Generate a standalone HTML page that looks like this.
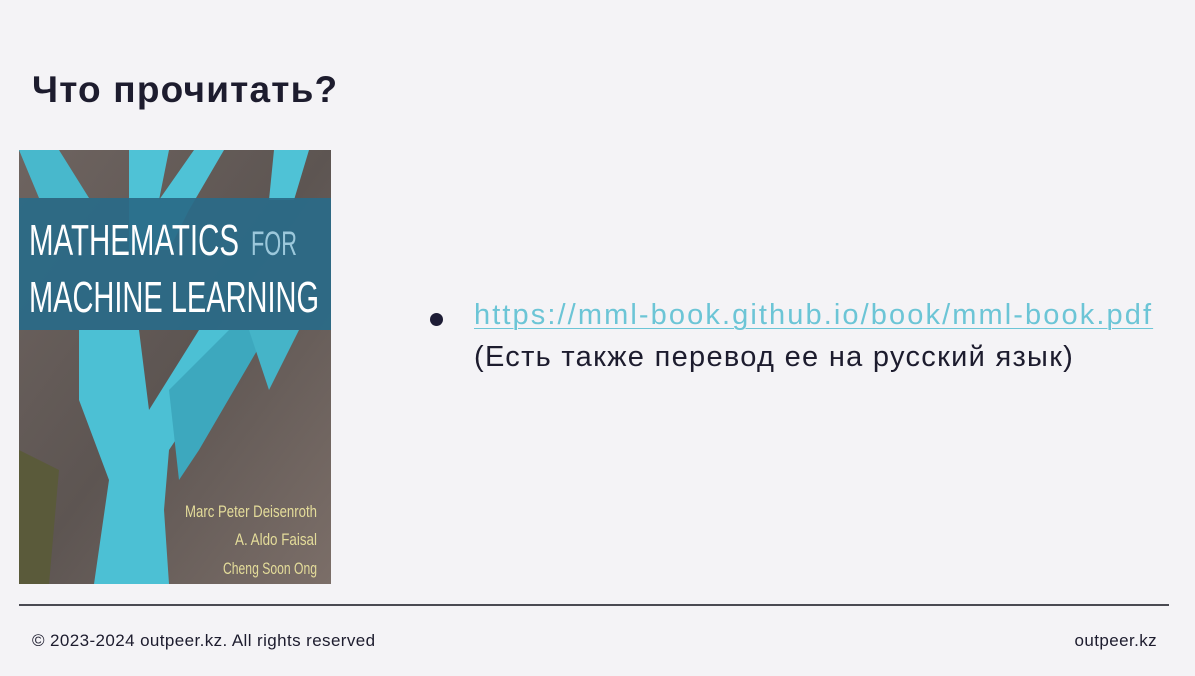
<!DOCTYPE html>
<html><head><meta charset="utf-8"><style>
html,body{margin:0;padding:0;}
body{width:1195px;height:676px;background:#f4f3f6;position:relative;overflow:hidden;font-family:"Liberation Sans",sans-serif;color:#1d1c2e;}
h1{position:absolute;left:32px;top:69px;margin:0;font-size:37px;font-weight:bold;letter-spacing:1.2px;}
.cover{position:absolute;left:19px;top:150px;width:312px;height:434px;}
.dot{position:absolute;left:430px;top:313px;width:13px;height:13px;border-radius:50%;background:#1d1c35;}
.link{position:absolute;left:474px;top:299px;font-size:29px;color:#6cc5d6;text-decoration:underline;text-decoration-thickness:1px;text-underline-offset:4px;white-space:nowrap;letter-spacing:2.1px;}
.ru{position:absolute;left:474px;top:341px;font-size:29px;white-space:nowrap;letter-spacing:1.3px;}
.line{position:absolute;left:19px;top:604px;width:1150px;height:2px;background:#4a4a52;}
.f1{position:absolute;left:32px;top:631px;font-size:17px;letter-spacing:0.4px;}
.f2{position:absolute;right:38px;top:631px;font-size:17px;letter-spacing:0.4px;}
</style></head><body>
<h1>Что прочитать?</h1>
<svg class="cover" viewBox="0 0 312 434" xmlns="http://www.w3.org/2000/svg">
<defs><linearGradient id="g" x1="0" y1="0" x2="1" y2="1"><stop offset="0" stop-color="#6e6460"/><stop offset="0.5" stop-color="#5d5552"/><stop offset="1" stop-color="#7b6e68"/></linearGradient></defs>
<rect width="312" height="434" fill="url(#g)"/>
<path d="M0 300 L40 320 L30 434 L0 434Z" fill="#5a5a3a"/>
<path d="M110 0 L150 0 L140 50 L175 0 L205 0 L170 60 L150 100 L110 100Z" fill="#4fc2d6"/>
<path d="M255 0 L290 0 L275 50 L250 50Z" fill="#4fc2d6"/>
<path d="M0 0 L40 0 L70 48 L20 48Z" fill="#48b8cc"/>
<path d="M60 180 L120 180 L130 260 L180 180 L230 180 L150 300 L145 360 L150 434 L75 434 L90 330 L60 250Z" fill="#4cc0d4"/>
<path d="M150 240 L210 180 L250 180 L180 300 L160 330Z" fill="#3da8be"/>
<path d="M230 180 L280 180 L250 240Z" fill="#45b4c8"/>
<rect x="0" y="48" width="312" height="132" fill="#2a6b88" opacity="0.93"/>
<text x="10" y="105" font-family="Liberation Sans Narrow,Liberation Sans,sans-serif" font-size="44" fill="#fff" textLength="210" lengthAdjust="spacingAndGlyphs">MATHEMATICS</text>
<text x="232" y="105" font-family="Liberation Sans Narrow,Liberation Sans,sans-serif" font-size="34" fill="#9cc8db" textLength="46" lengthAdjust="spacingAndGlyphs">FOR</text>
<text x="10" y="162" font-family="Liberation Sans Narrow,Liberation Sans,sans-serif" font-size="44" fill="#fff" textLength="290" lengthAdjust="spacingAndGlyphs">MACHINE LEARNING</text>
<text x="298" y="367" text-anchor="end" font-family="Liberation Sans Narrow,Liberation Sans,sans-serif" font-size="17" fill="#e4dc9a" textLength="132" lengthAdjust="spacingAndGlyphs">Marc Peter Deisenroth</text>
<text x="298" y="395" text-anchor="end" font-family="Liberation Sans Narrow,Liberation Sans,sans-serif" font-size="17" fill="#e4dc9a" textLength="82" lengthAdjust="spacingAndGlyphs">A. Aldo Faisal</text>
<text x="298" y="424" text-anchor="end" font-family="Liberation Sans Narrow,Liberation Sans,sans-serif" font-size="17" fill="#e4dc9a" textLength="94" lengthAdjust="spacingAndGlyphs">Cheng Soon Ong</text>
</svg>
<div class="dot"></div>
<div class="link">https://mml-book.github.io/book/mml-book.pdf</div>
<div class="ru">(Есть также перевод ее на русский язык)</div>
<div class="line"></div>
<div class="f1">© 2023-2024 outpeer.kz. All rights reserved</div>
<div class="f2">outpeer.kz</div>
</body></html>
